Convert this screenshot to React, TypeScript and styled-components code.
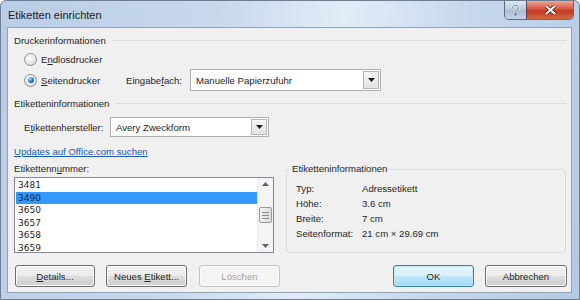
import { Fragment } from "react";
import styled, { createGlobalStyle } from "styled-components";

const GlobalStyle = createGlobalStyle`
    html, body {
        margin: 0;
        padding: 0;
        background: #ffffff;
    }
    * {
        box-sizing: border-box;
    }
`

const Window = styled.div`
    width: 580px;
    height: 300px;
    display: flex;
    flex-direction: column;
    border: 1px solid #6f7f93;
    border-radius: 6px 6px 0px 0px;
    background: linear-gradient(100deg, #b9cde6 0%, #c8d9ee 35%, #e2ecf7 55%, #c6d8ed 75%, #b4c9e3 100%);
    font-family: "Liberation Sans", Arial, sans-serif;
    font-size: 9.6px;
    color: #262626;
    overflow: hidden;
`

const TitleBar = styled.div`
    height: 26px;
    display: flex;
    flex-direction: row;
    align-items: flex-start;
    padding: 0px 5px 0px 7px;
`

const Title = styled.span`
    font-size: 11px;
    margin-top: 8px;
    color: #1b1b1b;
`

const CaptionGroup = styled.div`
    margin-left: auto;
    display: flex;
    flex-direction: row;
    border: 1px solid #5b6d84;
    border-top: none;
    border-radius: 0px 0px 5px 5px;
    overflow: hidden;
    height: 19px;
`

const CaptionButton = styled.div<{ $close?: boolean }>`
    width: ${(props) => (props.$close ? 47 : 21)}px;
    height: 100%;
    display: flex;
    justify-content: center;
    align-items: center;
    background: ${(props) =>
        props.$close
            ? "linear-gradient(#e9a99c, #d5543d 45%, #c23a22 55%, #d5664a)"
            : "linear-gradient(#dbe5f1, #bccde2 45%, #a9bdd6 55%, #c4d4e8)"};
    border-left: ${(props) => (props.$close ? "1px solid #6a4038" : "none")};
`

const Client = styled.div`
    flex: 1;
    margin: 0px 7px 6px 6px;
    border: 1px solid #8fa3bb;
    background: #f0f0f0;
    padding: 0px 4px 0px 6px;
    display: flex;
    flex-direction: column;
`

const Heading = styled.div<{ $top: number }>`
    margin-top: ${(props) => props.$top}px;
    height: 14px;
    display: flex;
    flex-direction: row;
    align-items: center;
    gap: 6px;
    &::after {
        content: "";
        flex: 1;
        height: 1px;
        background: #dcdcdc;
    }
`

const Row = styled.div<{ $top: number; $height: number }>`
    margin-top: ${(props) => props.$top}px;
    height: ${(props) => props.$height}px;
    padding-left: 10px;
    display: flex;
    flex-direction: row;
    align-items: center;
`

const RadioOption = styled.label<{ $width?: number }>`
    display: flex;
    flex-direction: row;
    align-items: center;
    gap: 4px;
    width: ${(props) => (props.$width ? props.$width + "px" : "auto")};
`

const RadioCircle = styled.span<{ $checked?: boolean }>`
    width: 13px;
    height: 13px;
    border-radius: 50%;
    border: 1px solid #8e8f8f;
    background: radial-gradient(circle at 40% 35%, #ffffff 0%, #e6e6e6 60%, #cfcfcf 100%);
    display: flex;
    justify-content: center;
    align-items: center;
    &::after {
        content: "";
        display: ${(props) => (props.$checked ? "block" : "none")};
        width: 6px;
        height: 6px;
        border-radius: 50%;
        background: radial-gradient(circle at 35% 30%, #9fdcff 0%, #1b6fb8 60%, #0d3f75 100%);
    }
`

const FieldLabel = styled.span<{ $width: number }>`
    width: ${(props) => props.$width}px;
`

const Combo = styled.div<{ $width: number; $height: number }>`
    width: ${(props) => props.$width}px;
    height: ${(props) => props.$height}px;
    border: 1px solid #abadb3;
    background: #ffffff;
    display: flex;
    flex-direction: row;
    align-items: center;
    padding: 1px;
`

const ComboText = styled.span`
    flex: 1;
    padding-left: 4px;
`

const ComboButton = styled.div`
    width: 16px;
    height: 100%;
    border: 1px solid #b6b6b6;
    background: linear-gradient(#f6f6f6, #e2e2e2);
    display: flex;
    justify-content: center;
    align-items: center;
`

const Link = styled.a`
    margin-top: 8px;
    height: 14px;
    line-height: 14px;
    color: #1c5ba8;
    text-decoration: underline;
    width: max-content;
`

const Bottom = styled.div`
    margin-top: 3px;
    height: 91px;
    display: flex;
    flex-direction: row;
    gap: 12px;
`

const LeftColumn = styled.div`
    width: 260px;
    display: flex;
    flex-direction: column;
`

const ListLabel = styled.div`
    height: 15px;
    line-height: 14px;
`

const ListBox = styled.div`
    flex: 1;
    border: 1px solid #828790;
    background: #ffffff;
    display: flex;
    flex-direction: row;
    overflow: hidden;
`

const ListItems = styled.div`
    flex: 1;
    padding: 1px 0px 0px 0px;
    font-family: "DejaVu Sans", sans-serif;
    font-size: 9px;
`

const ListItem = styled.div<{ $selected?: boolean }>`
    height: 12.5px;
    line-height: 12.5px;
    padding-left: 2px;
    margin-left: 1px;
    background: ${(props) => (props.$selected ? "#3399ff" : "transparent")};
    color: ${(props) => (props.$selected ? "#10234a" : "#262626")};
`

const ScrollBar = styled.div`
    width: 16px;
    background: #f4f4f4;
    border-left: 1px solid #ececec;
    display: flex;
    flex-direction: column;
    align-items: center;
    justify-content: space-between;
    padding: 4px 0px;
`

const ScrollThumb = styled.div`
    width: 13px;
    height: 16px;
    border: 1px solid #9a9a9a;
    border-radius: 2px;
    background: linear-gradient(90deg, #f3f3f3, #dcdcdc);
    display: flex;
    flex-direction: column;
    justify-content: center;
    align-items: center;
    gap: 2px;
    & > span {
        width: 7px;
        height: 1px;
        background: #8a8a8a;
    }
`

const GroupBox = styled.fieldset`
    width: 280px;
    margin: 1px 0px 0px 0px;
    padding: 0px 0px 0px 9px;
    border: 1px solid #dcdcdc;
    border-radius: 3px;
    display: block;
`

const GroupTitle = styled.legend`
    padding: 0px 1px;
    margin-left: -5px;
    line-height: 12px;
`

const InfoGrid = styled.div`
    margin-top: 6px;
    display: grid;
    grid-template-columns: 66px auto;
    grid-auto-rows: 15px;
    align-items: center;
`

const ButtonRow = styled.div`
    margin-top: 12px;
    height: 22px;
    display: flex;
    flex-direction: row;
    padding-left: 1px;
`

const Button = styled.div<{ $width: number; $gap?: number; $variant?: "default" | "disabled" }>`
    width: ${(props) => props.$width}px;
    margin-left: ${(props) => props.$gap || 0}px;
    height: 22px;
    border-radius: 3px;
    display: flex;
    justify-content: center;
    align-items: center;
    border: 1px solid ${(props) =>
        props.$variant === "default" ? "#3c7fb1" : props.$variant === "disabled" ? "#c3c3c3" : "#707070"};
    background: ${(props) =>
        props.$variant === "default"
            ? "linear-gradient(#eaf6fd 0%, #d9f0fc 50%, #bee6fd 51%, #a7d9f5 100%)"
            : props.$variant === "disabled"
            ? "#f4f4f4"
            : "linear-gradient(#f2f2f2 0%, #ebebeb 50%, #dddddd 51%, #cfcfcf 100%)"};
    color: ${(props) => (props.$variant === "disabled" ? "#a3a3a3" : "#262626")};
    box-shadow: ${(props) => (props.$variant === "default" ? "inset 0 0 0 1px #c4e5f6" : "inset 0 0 0 1px #fcfcfc")};
`

const Spacer = styled.div`
    flex: 1;
`

const U = styled.span`
    text-decoration: underline;
`

const numbers = ["3481", "3490", "3650", "3657", "3658", "3659"];

const info = [
    ["Typ:", "Adressetikett"],
    ["Höhe:", "3.6 cm"],
    ["Breite:", "7 cm"],
    ["Seitenformat:", "21 cm × 29.69 cm"],
];

function DropArrow() {
    return (
        <svg width="7" height="4" viewBox="0 0 7 4">
            <path d="M0 0 H7 L3.5 4 Z" fill="#1e1e1e" />
        </svg>
    );
}

export default function App() {
    return (
        <>
            <GlobalStyle />
            <Window>
                <TitleBar>
                    <Title>Etiketten einrichten</Title>
                    <CaptionGroup>
                        <CaptionButton>
                            <svg width="9" height="12" viewBox="0 0 9 12">
                                <path d="M1.5 3.5 C1.5 0.8 7.5 0.8 7.5 3.5 C7.5 5.5 4.5 5.5 4.5 8" fill="none" stroke="#ffffff" strokeWidth="2.2" />
                                <path d="M1.5 3.5 C1.5 0.8 7.5 0.8 7.5 3.5 C7.5 5.5 4.5 5.5 4.5 8" fill="none" stroke="#4a5c74" strokeWidth="1" />
                                <rect x="3.6" y="9.5" width="1.8" height="1.8" fill="#4a5c74" />
                            </svg>
                        </CaptionButton>
                        <CaptionButton $close>
                            <svg width="11" height="10" viewBox="0 0 11 10">
                                <path d="M1 1 L10 9 M10 1 L1 9" stroke="#5a1c12" strokeWidth="3.4" />
                                <path d="M1 1 L10 9 M10 1 L1 9" stroke="#ffffff" strokeWidth="2" />
                            </svg>
                        </CaptionButton>
                    </CaptionGroup>
                </TitleBar>
                <Client>
                    <Heading $top={5}>Druckerinformationen</Heading>
                    <Row $top={5} $height={14}>
                        <RadioOption>
                            <RadioCircle />
                            <span>E<U>n</U>dlosdrucker</span>
                        </RadioOption>
                    </Row>
                    <Row $top={3} $height={22}>
                        <RadioOption $width={102}>
                            <RadioCircle $checked />
                            <span><U>S</U>eitendrucker</span>
                        </RadioOption>
                        <FieldLabel $width={64}>Eingabe<U>f</U>ach:</FieldLabel>
                        <Combo $width={191} $height={22}>
                            <ComboText>Manuelle Papierzufuhr</ComboText>
                            <ComboButton><DropArrow /></ComboButton>
                        </Combo>
                    </Row>
                    <Heading $top={5}>Etiketteninformationen</Heading>
                    <Row $top={7} $height={20}>
                        <FieldLabel $width={86}>E<U>t</U>ikettenhersteller:</FieldLabel>
                        <Combo $width={159} $height={20}>
                            <ComboText>Avery Zweckform</ComboText>
                            <ComboButton><DropArrow /></ComboButton>
                        </Combo>
                    </Row>
                    <Link>Updates auf Office.com suchen</Link>
                    <Bottom>
                        <LeftColumn>
                            <ListLabel>Etikettenn<U>u</U>mmer:</ListLabel>
                            <ListBox>
                                <ListItems>
                                    {numbers.map((n) => (
                                        <ListItem key={n} $selected={n === "3490"}>{n}</ListItem>
                                    ))}
                                </ListItems>
                                <ScrollBar>
                                    <svg width="7" height="4" viewBox="0 0 7 4">
                                        <path d="M0 4 H7 L3.5 0 Z" fill="#606060" />
                                    </svg>
                                    <ScrollThumb><span /><span /><span /></ScrollThumb>
                                    <svg width="7" height="4" viewBox="0 0 7 4">
                                        <path d="M0 0 H7 L3.5 4 Z" fill="#606060" />
                                    </svg>
                                </ScrollBar>
                            </ListBox>
                        </LeftColumn>
                        <GroupBox>
                            <GroupTitle>Etiketteninformationen</GroupTitle>
                            <InfoGrid>
                                {info.map(([k, v]) => (
                                    <Fragment key={k}>
                                        <span>{k}</span>
                                        <span>{v}</span>
                                    </Fragment>
                                ))}
                            </InfoGrid>
                        </GroupBox>
                    </Bottom>
                    <ButtonRow>
                        <Button $width={80}><span><U>D</U>etails...</span></Button>
                        <Button $width={81} $gap={11}><span>Neues <U>E</U>tikett...</span></Button>
                        <Button $width={81} $gap={12} $variant="disabled">Löschen</Button>
                        <Spacer />
                        <Button $width={81} $variant="default">OK</Button>
                        <Button $width={82} $gap={11}>Abbrechen</Button>
                    </ButtonRow>
                </Client>
            </Window>
        </>
    );
}
